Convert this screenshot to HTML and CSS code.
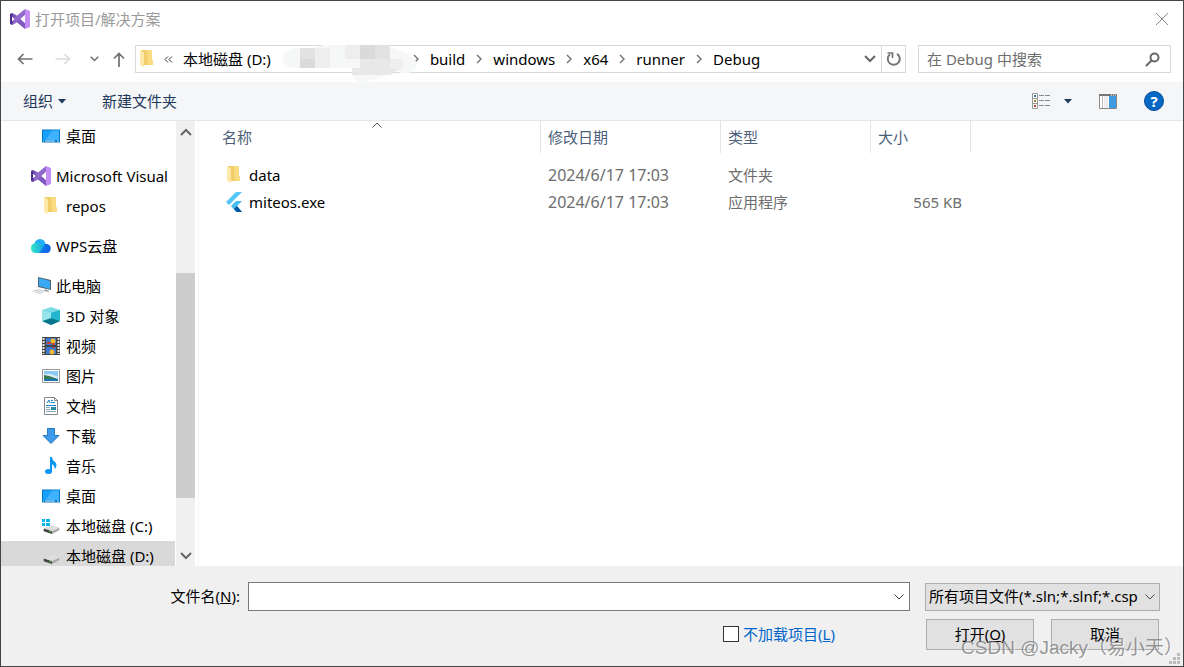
FILE: index.html
```
<!DOCTYPE html>
<html lang="zh-CN">
<head>
    <meta charset="UTF-8">
    <title>打开项目/解决方案</title>
    <link rel="stylesheet" href="styles.css">
</head>
<body>
    <!-- Shared icons -->
    <svg class="icon-defs" width="0" height="0">
        <symbol id="icon-vs" viewBox="0 0 20 20">
            <path d="M0 5l2-1 3 2.500v7L2 16l-2-1z" fill="#52308f"/>
            <path d="M2 4l4 2 9 8v6L4 11z" fill="#7f59be"/>
            <path d="M2 16l4-2 9-8V0L4 9z" fill="#9169cb"/>
            <path d="M15 0l5 2v16l-5 2z" fill="#c58cf5"/>
            <path d="M15 6v8l-4.500-4z" fill="#fff"/>
            <path d="M2 7.500v5L4.500 10z" fill="#fff"/>
        </symbol>
        <symbol id="icon-folder" viewBox="0 0 14 18">
            <path d="M1 0h11v10l1 1v4H1z" fill="#f2ce6b"/>
            <path d="M7 0h5v10l1 1v4H8z" fill="#f9dc82"/>
            <path d="M0 0l4 2.500V17L0 15z" fill="#ffe9a8"/>
        </symbol>
        <symbol id="icon-desktop" viewBox="0 0 18 14">
            <path d="M0 .5h18v13H0z" fill="#0078c8"/>
            <path d="M1 1.500h16v9.500H1z" fill="#18a0fb"/>
            <path d="M10 1.500h7V11H4z" fill="#3fb1ff"/>
            <path d="M1 12h1M3 12h10M15 12h2" stroke="#d8efff"/>
        </symbol>
        <symbol id="icon-drive" viewBox="0 0 19 11">
            <path d="M1 5l9-4 8 3-8 4z" fill="#dedede"/>
            <path d="M10 8l8-4v3l-8 4z" fill="#a9a9a9"/>
            <path d="M1 5l9 3v3L1 8z" fill="#414141"/>
            <path d="M7 8h2v1H7z" fill="#33e04a"/>
        </symbol>
        <symbol id="icon-down" viewBox="0 0 12 8">
            <path d="M1 1l5 5 5-5" fill="none" stroke="currentColor" stroke-width="2"/>
        </symbol>
        <symbol id="icon-thin-down" viewBox="0 0 10 6">
            <path d="M.5 .5L5 5l4.500-4.500" fill="none" stroke="currentColor"/>
        </symbol>
        <symbol id="icon-right" viewBox="0 0 6 10">
            <path d="M1 1l4 4-4 4" fill="none" stroke="#777" stroke-width="1.500"/>
        </symbol>
        <symbol id="icon-caret" viewBox="0 0 8 5">
            <path d="M0 0h8L4 4.500z" fill="#1e3a5f"/>
        </symbol>
    </svg>

    <div class="dialog">
        <header class="title-bar">
            <svg class="icon-20"><use href="#icon-vs"/></svg>
            <h1 class="title">打开项目/解决方案</h1>
            <button class="plain-button" aria-label="关闭">
                <svg width="14" height="14" viewBox="0 0 14 14"><path d="M1 1l12 12M13 1L1 13" stroke="#888"/></svg>
            </button>
        </header>

        <div class="address-row">
            <div class="nav-buttons">
                <button class="plain-button" aria-label="后退">
                    <svg width="16" height="12" viewBox="0 0 16 12"><path d="M15.500 6H1.500M6.500 1l-5 5 5 5" fill="none" stroke="#707070" stroke-width="1.700"/></svg>
                </button>
                <button class="plain-button" aria-label="前进">
                    <svg width="16" height="12" viewBox="0 0 16 12"><path d="M.5 6h14M9.500 1l5 5-5 5" fill="none" stroke="#dcdcdc" stroke-width="1.700"/></svg>
                </button>
                <button class="plain-button recent" aria-label="最近浏览的位置"><svg class="chevron-small"><use href="#icon-down"/></svg></button>
                <button class="plain-button" aria-label="上移">
                    <svg width="12" height="15" viewBox="0 0 12 15"><path d="M6 15V1.500M1 6.500l5-5 5 5" fill="none" stroke="#707070" stroke-width="1.700"/></svg>
                </button>
            </div>
            <div class="address-box">
                <nav class="breadcrumb">
                    <svg class="icon-folder"><use href="#icon-folder"/></svg>
                    <button class="plain-button more" aria-label="更多">
                        <svg width="9" height="7" viewBox="0 0 9 7"><path d="M4 .5l-3 3 3 3M8 .5l-3 3 3 3" fill="none" stroke="#333"/></svg>
                    </button>
                    <a class="crumb" href="#">本地磁盘 (D:)</a>
                    <svg class="mosaic" viewBox="0 0 135 38">
                        <path d="M12 3h20l10-3h60l14 5q17 6 19 14 0 7-9 9h-7l-6-3-4 2q-14 8-29 10-12 0-9-14H15Q0 22 0 13 0 6 12 3z" fill="#f6f7f7"/>
                        <path d="M18 3h15v11H18z" fill="#e2e2e2"/>
                        <path d="M18 14h15v9H18z" fill="#dadada"/>
                        <path d="M33 3h15v20H33zM63 0h15v14H63z" fill="#eee"/>
                        <path d="M78 0h15v14H78z" fill="#dadada"/>
                        <path d="M93 0h15v14H93z" fill="#e2e2e2"/>
                        <path d="M78 14h43v8l-13 8H70v-7h8z" fill="#e8e8e8"/>
                        <path d="M108 14h13v10h-13z" fill="#efefef"/>
                    </svg>
                    <svg class="crumb-arrow"><use href="#icon-right"/></svg>
                    <a class="crumb" href="#">build</a>
                    <svg class="crumb-arrow"><use href="#icon-right"/></svg>
                    <a class="crumb" href="#">windows</a>
                    <svg class="crumb-arrow"><use href="#icon-right"/></svg>
                    <a class="crumb" href="#">x64</a>
                    <svg class="crumb-arrow"><use href="#icon-right"/></svg>
                    <a class="crumb" href="#">runner</a>
                    <svg class="crumb-arrow"><use href="#icon-right"/></svg>
                    <a class="crumb" href="#">Debug</a>
                </nav>
                <button class="plain-button address-drop" aria-label="以前的位置"><svg class="chevron"><use href="#icon-down"/></svg></button>
                <button class="plain-button refresh" aria-label="刷新">
                    <svg width="16" height="16" viewBox="0 0 16 16"><path d="M11 2.800A6 6 0 1 1 4 3.200" fill="none" stroke="#777" stroke-width="2"/><path d="M1.500 2H6.500V7" fill="none" stroke="#777" stroke-width="1.700"/></svg>
                </button>
            </div>
            <div class="search-box">
                <input class="search-input" type="text" placeholder="在 Debug 中搜索" aria-label="搜索">
                <svg width="15" height="15" viewBox="0 0 15 15"><circle cx="9.500" cy="5.500" r="4" fill="none" stroke="#666" stroke-width="2"/><path d="M6.500 8.500l-5.500 5.500" stroke="#666" stroke-width="2"/></svg>
            </div>
        </div>

        <div class="toolbar">
            <button class="plain-button tool">组织 <svg class="caret"><use href="#icon-caret"/></svg></button>
            <button class="plain-button tool">新建文件夹</button>
            <div class="view-tools">
                <button class="plain-button view-mode" aria-label="更改视图">
                    <svg width="19" height="16" viewBox="0 0 19 16">
                        <path d="M.5 .5h5v15h-5zM.5 5.500h5M.5 10.500h5" fill="#fff" stroke="#999"/>
                        <path d="M2 2h2v2H2z" fill="#2c7ea5"/><path d="M2 7h2v2H2z" fill="#978232"/><path d="M2 12h2v2H2z" fill="#c33b2a"/>
                        <path d="M7 2.500h5M13 2.500h5M7 7.500h5M13 7.500h5M7 12.500h5M13 12.500h5" stroke="#888"/>
                    </svg>
                    <svg class="caret"><use href="#icon-caret"/></svg>
                </button>
                <button class="plain-button" aria-label="预览窗格">
                    <svg width="18" height="15" viewBox="0 0 18 15">
                        <path d="M.5 .5h17v14H.5z" fill="#fff" stroke="#888"/><path d="M0 1h18" stroke="#777" stroke-width="2"/>
                        <path d="M3.500 2v12" stroke="#bbb"/><path d="M5 2h4v12H5z" fill="#ececec"/><path d="M10 2h7v12h-7z" fill="#3e9be0"/><path d="M12 1h1M14 1h1M16 1h1" stroke="#fff"/>
                    </svg>
                </button>
                <button class="plain-button help" aria-label="帮助">?</button>
            </div>
        </div>

        <div class="content">
            <nav class="sidebar">
                <div class="group">
                    <a class="item child" href="#"><svg class="icon-18"><use href="#icon-desktop"/></svg>桌面</a>
                </div>
                <div class="group">
                    <a class="item" href="#"><svg class="icon-20"><use href="#icon-vs"/></svg>Microsoft Visual</a>
                    <a class="item child" href="#"><svg class="icon-18"><use href="#icon-folder"/></svg>repos</a>
                </div>
                <div class="group">
                    <a class="item" href="#">
                        <svg class="icon-20" viewBox="0 0 20 20">
                            <defs>
                                <linearGradient id="cloud-left"><stop stop-color="#35e3c4"/><stop offset="1" stop-color="#149ff0"/></linearGradient>
                                <linearGradient id="cloud-right"><stop stop-color="#1da0fa"/><stop offset="1" stop-color="#0b55df"/></linearGradient>
                            </defs>
                            <circle cx="9" cy="8.500" r="5.500" fill="#21aefc"/>
                            <path d="M8 17l6-9q6 0 5.500 5-.5 4-4 4z" fill="url(#cloud-right)"/>
                            <path d="M6 7q-6 0-6 5t5 5h6l4-6Q11 7 6 7z" fill="url(#cloud-left)"/>
                            <path d="M8 17l6-9q6 0 5.500 5-.5 4-4 4z" fill="#1268e9" opacity=".7"/>
                        </svg>WPS云盘</a>
                </div>
                <div class="group">
                    <a class="item" href="#">
                        <svg class="icon-20" viewBox="0 0 20 20">
                            <path d="M7 1l13 3v10L7 11z" fill="#4f6472"/><path d="M8 2l11 3v8L8 10z" fill="#38a9f2"/>
                            <path d="M14 13l-1 2 5 1v-1l-2-1z" fill="#999"/><path d="M1 15l6-2 8 2-6 3z" fill="#c3c8cd"/><path d="M3 15l8 2M6 14l8 2" stroke="#eef0f2"/>
                        </svg>此电脑</a>
                    <a class="item child" href="#">
                        <svg class="icon-18" viewBox="0 0 18 18">
                            <path d="M0 3l9-3 9 3-9 3z" fill="#7bdbe5"/><path d="M0 3l9 3v12l-9-4z" fill="#4dc5d5"/><path d="M9 6l9-3v11l-9 4z" fill="#159eb5"/><path d="M0 14l9-3 9 3-9 4z" fill="#08778c"/><path d="M9 6l9-3v11l-9-3z" fill="#22b5ce"/><path d="M0 3l9 3v5l-9 3z" fill="#99e4ec"/>
                        </svg>3D 对象</a>
                    <a class="item child" href="#">
                        <svg class="icon-18" viewBox="0 0 18 18">
                            <path d="M0 0h18v18H0z" fill="#444"/><path d="M1.500 1v16M16.500 1v16" stroke="#e6e6e6" stroke-width="2" stroke-dasharray="2 1"/>
                            <path d="M4 1h10v7H4zM4 10h10v7H4z" fill="#3b78d1"/><circle cx="11" cy="4" r="2.500" fill="#f6bd2a"/><path d="M5 5h4v2H5zM10 6h3v2h-3z" fill="#c8402d"/><circle cx="10" cy="15" r="2.500" fill="#f0b735"/><path d="M10 10h3l-1 2z" fill="#bf3f27"/>
                        </svg>视频</a>
                    <a class="item child" href="#">
                        <svg class="icon-18" viewBox="0 0 18 18">
                            <path d="M.5 2.500h17v13H.5z" fill="#fff" stroke="#999"/><path d="M2 4h14v10H2z" fill="#8dc9f4"/><path d="M2 7h7l7 3v2H2z" fill="#dceef5"/><path d="M2 8l5 1 9 3H2z" fill="#397654"/><path d="M2 12h14v2H2z" fill="#1875af"/>
                        </svg>图片</a>
                    <a class="item child" href="#">
                        <svg class="icon-18" viewBox="0 0 18 18">
                            <path d="M2.500 .5h10l3 3v14h-13z" fill="#fff" stroke="#888"/><path d="M12.500 .5v3h3" fill="none" stroke="#888"/>
                            <path d="M5 6l2-3 1 3M9 3.500h2M9 5.500h4M4 8.500h10" fill="none" stroke="#2086ca"/><path d="M4 10.500h4M4 12.500h4M4 14.500h10" stroke="#8aaabd"/><path d="M9 10h5v3H9z" fill="#258aa8"/>
                        </svg>文档</a>
                    <a class="item child" href="#">
                        <svg class="icon-18" viewBox="0 0 18 18"><path d="M5.500 1.500h7v7H17l-8 8-8-8h4.500z" fill="#3d9ae8" stroke="#2379c3"/></svg>下载</a>
                    <a class="item child" href="#">
                        <svg class="icon-18" viewBox="0 0 18 18"><ellipse cx="6.500" cy="14.500" rx="3.500" ry="2.500" fill="#0796f5"/><path d="M8 0h2q0 3 3 5 3 3 0 7 0-3-3-5v8H8z" fill="#0796f5"/></svg>音乐</a>
                    <a class="item child" href="#"><svg class="icon-18"><use href="#icon-desktop"/></svg>桌面</a>
                    <a class="item child" href="#">
                        <svg class="icon-18" viewBox="0 0 18 18"><path d="M0 2h3v3H0zM4 2h4v3H4zM0 6h3v3H0zM4 6h4v3H4z" fill="#08b3ef"/><use href="#icon-drive" y="7" width="19" height="10"/></svg>本地磁盘 (C:)</a>
                    <a class="item child selected" href="#">
                        <svg class="icon-18" viewBox="0 0 18 18"><use href="#icon-drive" y="7" width="19" height="10"/></svg>本地磁盘 (D:)</a>
                </div>
            </nav>
            <div class="scrollbar">
                <button class="plain-button scroll-button up" aria-label="向上滚动"><svg class="chevron"><use href="#icon-down"/></svg></button>
                <div class="track-before"></div>
                <div class="thumb"></div>
                <div class="track-after"></div>
                <button class="plain-button scroll-button" aria-label="向下滚动"><svg class="chevron"><use href="#icon-down"/></svg></button>
            </div>

            <main class="file-list">
                <table class="files">
                    <thead>
                        <tr>
                            <th class="col-name">名称<svg class="sort-arrow"><use href="#icon-thin-down"/></svg></th>
                            <th class="col-date">修改日期</th>
                            <th class="col-type">类型</th>
                            <th class="col-size">大小</th>
                        </tr>
                    </thead>
                    <tbody>
                        <tr>
                            <td class="name"><div class="file"><svg class="icon-file"><use href="#icon-folder"/></svg>data</div></td>
                            <td class="latin">2024/6/17 17:03</td>
                            <td>文件夹</td>
                            <td></td>
                        </tr>
                        <tr>
                            <td class="name"><div class="file">
                                <svg class="icon-file flutter" viewBox="0 0 16 20"><path d="M0 10L10 0h6L3 13z" fill="#54c5f8"/><path d="M5 14l5-5h6l-5 5 5 6h-6z" fill="#46bdf0"/><path d="M8 17l3-3 5 6h-5z" fill="#01579b"/></svg>miteos.exe</div></td>
                            <td class="latin">2024/6/17 17:03</td>
                            <td>应用程序</td>
                            <td class="size">565 KB</td>
                        </tr>
                    </tbody>
                </table>
            </main>
        </div>

        <footer class="footer">
            <label class="name-label" for="file-name">文件名(<u>N</u>):</label>
            <div class="combo">
                <input class="combo-input" type="text" id="file-name">
                <button class="plain-button combo-drop" aria-label="展开"><svg class="chevron-thin"><use href="#icon-thin-down"/></svg></button>
            </div>
            <div class="filter">
                <select class="filter-select" aria-label="文件类型">
                    <option>所有项目文件(*.sln;*.slnf;*.csp</option>
                </select>
                <svg class="chevron-thin filter-arrow"><use href="#icon-thin-down"/></svg>
            </div>
            <div class="skip-load">
                <input class="check" type="checkbox" id="skip-load">
                <label for="skip-load">不加载项目(<u>L</u>)</label>
            </div>
            <div class="actions">
                <button class="action-button">打开(<u>O</u>)</button>
                <button class="action-button">取消</button>
            </div>
        </footer>

        <svg class="resize-grip" viewBox="0 0 11 11"><path d="M8 0h3v3H8zM4 4h3v3H4zM8 4h3v3H8zM0 8h3v3H0zM4 8h3v3H4zM8 8h3v3H8z" fill="#bcbcbc"/></svg>
        <div class="watermark">CSDN @Jacky（易小天）</div>
    </div>
</body>
</html>
```
FILE: styles.css
```
* {
    box-sizing: border-box;
}

body {
    margin: 0;
    font-family: "Noto Sans", "Noto Sans CJK SC", sans-serif;
    font-size: 15px;
    line-height: 20px;
    color: #000;
}

a {
    color: inherit;
    text-decoration: none;
}

input,
select,
button {
    font: inherit;
    color: inherit;
}

svg {
    flex-shrink: 0;
}

.icon-defs {
    position: absolute;
}

.dialog {
    position: relative;
    display: flex;
    flex-direction: column;
    height: 100vh;
    overflow: hidden;
    background-color: #fff;
    border: 1px solid #444;
}

.plain-button {
    display: flex;
    align-items: center;
    justify-content: center;
    padding: 0;
    background: none;
    border: none;
}

/* Icon sizes */
.icon-20 {
    width: 20px;
    height: 20px;
}

.icon-18 {
    width: 18px;
    height: 18px;
}

.icon-folder {
    width: 14px;
    height: 18px;
}

.icon-file {
    width: 16px;
    height: 18px;
}

.flutter {
    height: 20px;
}

.chevron {
    width: 12px;
    height: 8px;
    color: #666;
}

.chevron-small {
    width: 9px;
    height: 6px;
    color: #707070;
}

.chevron-thin {
    width: 10px;
    height: 6px;
    color: #444;
}

.caret {
    width: 8px;
    height: 5px;
}

/* Title bar */
.title-bar {
    display: flex;
    align-items: center;
    gap: 5px;
    height: 36px;
    padding: 0 14px 0 9px;
}

.title {
    flex: 1;
    margin: 0;
    font-size: 15px;
    font-weight: 400;
    color: #999;
}

/* Address bar and search */
.address-row {
    display: flex;
    gap: 12px;
    padding: 8px 12px 9px 16px;
}

.nav-buttons {
    display: flex;
    align-items: center;
    gap: 22px;
    width: 106px;
}

.recent {
    margin: 0 -8px 0 -3px;
}

.address-box {
    display: flex;
    flex: 1;
    height: 28px;
    border: 1px solid #d9d9d9;
}

.breadcrumb {
    display: flex;
    flex: 1;
    align-items: center;
    padding-left: 4px;
}

.more {
    margin: 0 10px;
}

.crumb:first-of-type {
    margin-right: 11px;
}

.mosaic {
    z-index: 1;
    width: 135px;
    height: 38px;
    margin: 0 -15px -10px 0;
}

.crumb-arrow {
    width: 6px;
    height: 10px;
    margin: 0 11px;
}

.address-drop {
    width: 22px;
}

.refresh {
    width: 24px;
    border-left: 1px solid #d9d9d9;
}

.search-box {
    display: flex;
    align-items: center;
    width: 253px;
    padding: 0 10px 0 8px;
    border: 1px solid #d9d9d9;
}

.search-input {
    flex: 1;
    min-width: 0;
    padding: 0;
    background: none;
    border: none;
    outline: none;
}

.search-input::placeholder {
    color: #6d6d6d;
}

/* Toolbar */
.toolbar {
    display: flex;
    align-items: center;
    gap: 36px;
    height: 39px;
    padding: 0 19px 0 22px;
    background-color: #f4f6f8;
    border-bottom: 1px solid #e6e6e6;
}

.tool {
    gap: 5px;
    color: #1e395b;
}

.view-tools {
    display: flex;
    align-items: center;
    gap: 27px;
    margin-left: auto;
}

.view-mode {
    gap: 13px;
}

.help {
    width: 20px;
    height: 20px;
    font-weight: 700;
    color: #fff;
    background-color: #0568c4;
    border: 1px solid #064f99;
    border-radius: 50%;
}

/* Folder tree and file list */
.content {
    display: flex;
    flex: 1;
    min-height: 0;
}

.sidebar {
    display: flex;
    flex-direction: column;
    gap: 10px;
    width: 174px;
    overflow: hidden;
}

.item {
    display: flex;
    align-items: center;
    gap: 5px;
    height: 30px;
    padding-left: 30px;
    white-space: nowrap;
}

.child {
    gap: 6px;
    padding-left: 41px;
}

.selected {
    background-color: #d9d9d9;
}

.scrollbar {
    display: flex;
    flex-direction: column;
    width: 19px;
    margin-left: 1px;
    background-color: #f0f0f0;
}

.scroll-button {
    height: 21px;
}

.up svg {
    transform: rotate(180deg);
}

.track-before {
    flex: 131;
}

.thumb {
    flex: 225;
    background-color: #cdcdcd;
}

.track-after {
    flex: 47;
}

.file-list {
    flex: 1;
    margin-left: 3px;
    padding-left: 15px;
    border-left: 1px solid #f5f5f5;
}

.files {
    table-layout: fixed;
    width: 757px;
    border-collapse: separate;
    border-spacing: 0;
    color: #6d6d6d;
}

.files th {
    position: relative;
    height: 32px;
    padding: 0 7px;
    font-weight: 400;
    text-align: left;
    color: #4c607a;
    border-right: 1px solid #e5e5e5;
}

.files td {
    height: 27px;
    padding: 0 7px;
}

.files tbody::before {
    content: "";
    display: block;
    height: 8px;
}

.files .col-name {
    width: 327px;
    padding-left: 8px;
}

.col-date {
    width: 180px;
}

.col-type {
    width: 150px;
}

.col-size {
    width: 100px;
}

.sort-arrow {
    position: absolute;
    top: 1px;
    left: 50%;
    width: 10px;
    height: 6px;
    color: #555;
    transform: translateX(-50%) rotate(180deg);
}

.files .name {
    padding-left: 12px;
    color: #000;
}

.file {
    display: flex;
    align-items: center;
    gap: 7px;
}

.files .latin {
    font-size: 16px;
}

.files .size {
    padding-right: 9px;
    text-align: right;
}

/* File name, filter and buttons */
.footer {
    display: grid;
    grid-template-columns: 239px 1fr 235px;
    grid-template-rows: 29px 32px;
    gap: 7px 0;
    align-items: center;
    padding: 16px 23px 16px 0;
    background-color: #f0f0f0;
}

.name-label {
    padding-bottom: 2px;
    text-align: right;
}

.combo {
    display: flex;
    height: 29px;
    margin: 0 15px 0 8px;
    background-color: #fff;
    border: 1px solid #7a7a7a;
}

.combo-input {
    flex: 1;
    min-width: 0;
    padding: 0 4px;
    background: none;
    border: none;
    outline: none;
}

.combo-drop {
    width: 20px;
}

.filter {
    position: relative;
}

.filter-select {
    display: block;
    width: 100%;
    height: 28px;
    padding: 0 20px 2px 3px;
    appearance: none;
    background-color: #e1e1e1;
    border: 1px solid #adadad;
    border-radius: 0;
}

.filter-arrow {
    position: absolute;
    top: 11px;
    right: 5px;
    pointer-events: none;
}

.skip-load {
    display: flex;
    grid-column: 2;
    align-items: center;
    justify-content: flex-end;
    gap: 4px;
    padding-right: 90px;
    color: #0066cc;
}

.check {
    width: 16px;
    height: 16px;
    margin: 0;
    appearance: none;
    background-color: #fff;
    border: 1px solid #333;
}

.check:checked {
    background-color: #0066cc;
}

.actions {
    display: flex;
    gap: 17px;
    padding: 0 1px;
}

.action-button {
    flex: 1;
    height: 31px;
    padding: 0;
    background-color: #e1e1e1;
    border: 1px solid #adadad;
}

.resize-grip {
    position: absolute;
    right: 3px;
    bottom: 2px;
    width: 11px;
    height: 11px;
}

.watermark {
    position: absolute;
    right: 0;
    bottom: 5px;
    font-family: "Liberation Sans", "Noto Sans CJK SC", sans-serif;
    font-size: 19px;
    line-height: 26px;
    color: rgba(120, 120, 120, 0.75);
    text-shadow: 1px 1px 0 rgba(255, 255, 255, 0.6);
    pointer-events: none;
}
```
